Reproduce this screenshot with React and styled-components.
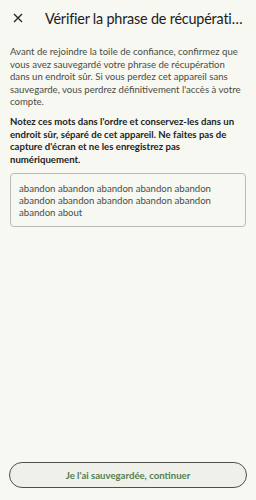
import React from 'react'
import styled, { createGlobalStyle } from 'styled-components'

const Global = createGlobalStyle`
    html, body {
        margin: 0;
        padding: 0;
        background: #f6f8f1;
    }
    body {
        font-family: 'Lato', 'Noto Sans', sans-serif;
    }
`

const Page = styled.div`
    width: 256px;
    height: 500px;
    display: flex;
    flex-direction: column;
    background: #f6f8f1;
    box-sizing: border-box;
`

const Header = styled.div`
    display: flex;
    align-items: center;
    height: 36px;
    padding: 0 12px 0 12px;
    gap: 21px;
`

const CloseButton = styled.button`
    width: 12px;
    height: 14px;
    padding: 0;
    border: none;
    background: transparent;
    display: flex;
    align-items: center;
    justify-content: center;
    color: #222;
    flex-shrink: 0;
`

const Title = styled.h1`
    margin: 0;
    font-size: 14.4px;
    letter-spacing: -0.2px;
    font-weight: 400;
    color: #1e201c;
    white-space: nowrap;
    overflow: hidden;
    text-overflow: ellipsis;
    flex: 1;
    min-width: 0;
`

const Content = styled.div`
    flex: 1;
    padding: 10px 10px 0 10px;
    display: flex;
    flex-direction: column;
`

const Paragraph = styled.p`
    margin: 0 0 7px 0;
    font-size: 9.6px;
    line-height: 12.6px;
    color: ${p => (p.$strong ? '#22241f' : '#4a4c47')};
    font-weight: ${p => (p.$strong ? 700 : 400)};
`

const PhraseBox = styled.div`
    margin-top: 0;
    border: 1px solid #b9bbb4;
    border-radius: 4px;
    padding: 9px 8px 7px 8px;
    font-size: 9.6px;
    line-height: 12px;
    color: #4a4c47;
`

const Footer = styled.div`
    padding: 0 9px 12px 9px;
`

const PrimaryButton = styled.button`
    width: 100%;
    height: 26px;
    border-radius: 13px;
    border: 1.5px solid #4e504b;
    background: #eef0e9;
    color: #55804f;
    font-family: 'Lato', 'Noto Sans', sans-serif;
    font-size: 9.6px;
    font-weight: 700;
`

const CloseIcon = () => (
    <svg width="10" height="10" viewBox="0 0 10 10" fill="none" stroke="currentColor" strokeWidth="1.3">
        <path d="M1 1 L9 9 M9 1 L1 9" />
    </svg>
)

const App = () => {
    return (
        <Page>
            <Global />
            <Header>
                <CloseButton><CloseIcon /></CloseButton>
                <Title>Vérifier la phrase de récupération</Title>
            </Header>
            <Content>
                <Paragraph>
                    Avant de rejoindre la toile de confiance, confirmez que vous avez sauvegardé votre phrase de récupération dans un endroit sûr. Si vous perdez cet appareil sans sauvegarde, vous perdrez définitivement l'accès à votre compte.
                </Paragraph>
                <Paragraph $strong>
                    Notez ces mots dans l'ordre et conservez-les dans un endroit sûr, séparé de cet appareil. Ne faites pas de capture d'écran et ne les enregistrez pas numériquement.
                </Paragraph>
                <PhraseBox>
                    abandon abandon abandon abandon abandon abandon abandon abandon abandon abandon abandon about
                </PhraseBox>
            </Content>
            <Footer>
                <PrimaryButton>Je l'ai sauvegardée, continuer</PrimaryButton>
            </Footer>
        </Page>
    )
}

export default App
